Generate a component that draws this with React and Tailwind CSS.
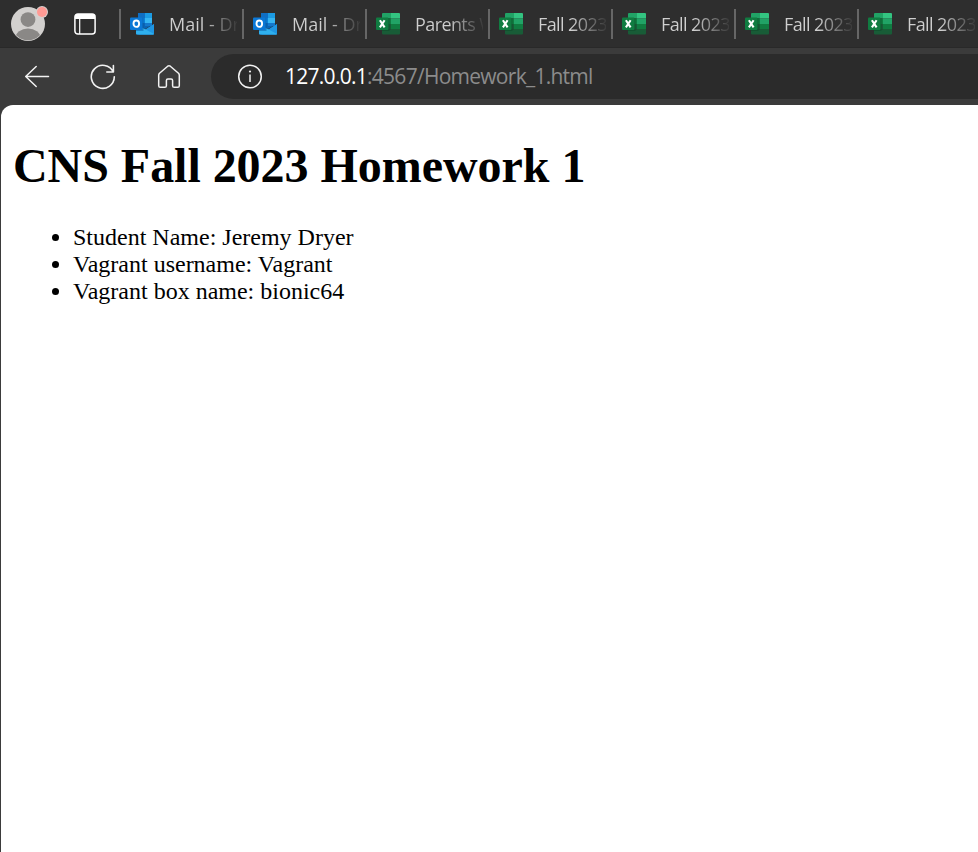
const tabs = [
  { kind: 'outlook', title: 'Mail - Dryer' },
  { kind: 'outlook', title: 'Mail - Dryer' },
  { kind: 'excel', title: 'Parents W' },
  { kind: 'excel', title: 'Fall 2023' },
  { kind: 'excel', title: 'Fall 2023' },
  { kind: 'excel', title: 'Fall 2023' },
  { kind: 'excel', title: 'Fall 2023' },
];

function Avatar() {
  return (
    <svg className="h-12 w-12 shrink-0" viewBox="0 0 48 48">
      <defs>
        <clipPath id="face"><circle cx="28" cy="24" r="16.2" /></clipPath>
      </defs>
      <circle cx="28" cy="24" r="17" fill="#d2d0ce" />
      <g clipPath="url(#face)" fill="#8a8886">
        <circle cx="28" cy="19.6" r="7.4" />
        <ellipse cx="28" cy="38" rx="12.5" ry="9.5" />
      </g>
      <circle cx="42" cy="12" r="6" fill="#d8d0ce" />
      <circle cx="42" cy="12" r="5" fill="#ff9a94" />
    </svg>
  );
}

function TabActions() {
  return (
    <svg className="ml-[26px] h-[22px] w-[22px] shrink-0" viewBox="0 0 22 22" fill="none">
      <rect x="0.9" y="0.9" width="20.2" height="20.2" rx="3" stroke="#fff" strokeWidth="1.5" />
      <path d="M1 6V4a3 3 0 0 1 3-3h14a3 3 0 0 1 3 3v2z" fill="#fff" />
      <path d="M5.7 6v15" stroke="#fff" strokeWidth="1.2" />
    </svg>
  );
}

function Outlook() {
  return (
    <svg className="h-6 w-6 shrink-0" viewBox="0 0 24 24">
      <path d="M8 1h14v12l-7 4-9-4V6h2z" fill="#0a64b4" />
      <path d="M8 1h7v5H8z" fill="#0f6fc4" />
      <path d="M15 1h7v5h-7z" fill="#1b9be3" />
      <path d="M15 6h7v5h-7z" fill="#36b5f2" />
      <path d="M8 6h7v5H8z" fill="#0c80d8" />
      <path d="M15 11h7v3h-7z" fill="#1478cc" />
      <path d="M6 13l9 5 9-6v9.500q0 1-1 1H7q-1 0-1-1z" fill="#1276ca" />
      <path d="M24 12v9.500q0 1-1 1H8l8-5.500z" fill="#1f96e2" />
      <path d="M12 15.500l12 6.500q-.5.500-1 .5H7q-1 0-1-1V18h6z" fill="#2fb0ee" />
      <path d="M6 6h7.500v13H6z" fill="#0a4f92" opacity=".45" />
      <rect x="0" y="5.500" width="12.500" height="12.500" rx="1" fill="#0b78d6" />
      <ellipse cx="6.300" cy="11.700" rx="2.800" ry="3.200" fill="none" stroke="#fff" strokeWidth="1.900" />
    </svg>
  );
}

function Excel() {
  return (
    <svg className="h-6 w-6 shrink-0" viewBox="0 0 24 24">
      <path d="M7 1h8v5.500H6V2q0-1 1-1z" fill="#21a366" />
      <path d="M15 1h8q1 0 1 1v4.500h-9z" fill="#33c481" />
      <path d="M6 6.500h9V12H6z" fill="#107c41" />
      <path d="M15 6.500h9V12h-9z" fill="#21a366" />
      <path d="M6 12h18v5.500H6z" fill="#185c37" />
      <path d="M15 12h9v5.500h-9z" fill="#107c41" />
      <path d="M6 17.500h18V21.500q0 1-1 1H7q-1 0-1-1z" fill="#185c37" />
      <path d="M6 6h7.500v13H6z" fill="#0b4527" opacity=".5" />
      <rect x="0" y="5.500" width="12.500" height="12.500" rx="1" fill="#107c41" />
      <path d="M3.900 8.200l4.700 7.200M8.600 8.200l-4.700 7.200" stroke="#fff" strokeWidth="2.100" />
    </svg>
  );
}

function Tab({ kind, title }) {
  const spacing = kind === 'outlook' ? 'tracking-[0px]' : 'tracking-[-0.6px]';
  return (
    <div className="flex w-[123px] shrink-0 items-center">
      <div className="h-[30px] w-[2px] shrink-0 bg-[#666666]" />
      <div className="ml-[9px] flex h-6 w-6 shrink-0">{kind === 'outlook' ? <Outlook /> : <Excel />}</div>
      <div className={`ml-[15px] w-[68px] overflow-hidden whitespace-nowrap bg-linear-to-r from-[#cfcfcf] from-50% to-[#3a3a3a] bg-clip-text font-['Open_Sans',sans-serif] text-[18px] leading-[30px] text-transparent ${spacing}`}>
        {title}
      </div>
    </div>
  );
}

export default function App() {
  return (
    <div className="flex h-[852px] w-[978px] flex-col overflow-hidden bg-[#3b3b3b]">
      <div className="flex h-12 shrink-0 items-center overflow-hidden border-b border-[#292929] bg-[#2e2e2e]">
        <Avatar />
        <TabActions />
        <div className="ml-[23px] flex pt-px">
          {tabs.map((tab, i) => <Tab key={i} {...tab} />)}
        </div>
      </div>
      <div className="flex h-[57px] shrink-0 items-center pl-[24px]">
        <svg className="h-[26px] w-[26px] shrink-0" viewBox="0 0 26 26" fill="none" stroke="#f2f2f2" strokeWidth="1.5" strokeLinecap="round" strokeLinejoin="round">
          <path d="M24.500 12.500H1.700M12.200 2.500L1.700 12.500l10.500 10" />
        </svg>
        <svg className="ml-[40px] h-[26px] w-[26px] shrink-0" viewBox="0 0 26 26" fill="none" stroke="#f2f2f2" strokeWidth="1.6" strokeLinecap="round" strokeLinejoin="round">
          <path d="M23.250 8A11.500 11.500 0 1 0 24.300 12.800M23.400 1.500V8h-6.600" />
        </svg>
        <svg className="ml-[40px] h-[26px] w-[26px] shrink-0" viewBox="0 0 26 26" fill="none" stroke="#f2f2f2" strokeWidth="1.500" strokeLinejoin="round">
          <path d="M11.700 2.200q1.300-1 2.600 0l8.200 7.100q.8.800.8 1.900v10.500q0 1.600-1.600 1.600h-3.500q-1.600 0-1.600-1.600v-5.200q0-1.500-1.500-1.500h-3.200q-1.500 0-1.500 1.500v5.200q0 1.600-1.600 1.600H4.300q-1.600 0-1.600-1.600V11.200q0-1.100.8-1.900z" />
        </svg>
        <div className="ml-[29px] flex h-[45px] flex-1 items-center rounded-l-full bg-[#2b2b2b] pl-[26px]">
          <svg className="h-[26px] w-[26px] shrink-0" viewBox="0 0 26 26" fill="none">
            <circle cx="13" cy="12.500" r="11.300" stroke="#f2f2f2" strokeWidth="1.500" />
            <path d="M13 10.500v7.500" stroke="#f2f2f2" strokeWidth="1.500" />
            <circle cx="13" cy="7.500" r="1.100" fill="#f2f2f2" />
          </svg>
          <div className="ml-[22px] -mt-px whitespace-nowrap font-['Open_Sans',sans-serif] text-[21px] leading-[30px] tracking-[-0.73px] text-[#8c8c8c]">
            <span className="text-white">127.0.0.1</span>:4567/Homework_1.html
          </div>
        </div>
      </div>
      <main className="ml-px flex-1 rounded-tl-[12px] bg-white px-3 font-['Liberation_Serif',serif] text-2xl leading-[27px] text-black">
        <h1 className="mt-[33px] text-5xl leading-[55px] font-bold tracking-[-0.04px]">CNS Fall 2023 Homework 1</h1>
        <ul className="mt-[31px] list-disc pl-[60px]">
          <li>Student Name: Jeremy Dryer</li>
          <li>Vagrant username: Vagrant</li>
          <li>Vagrant box name: bionic64</li>
        </ul>
      </main>
    </div>
  );
}
